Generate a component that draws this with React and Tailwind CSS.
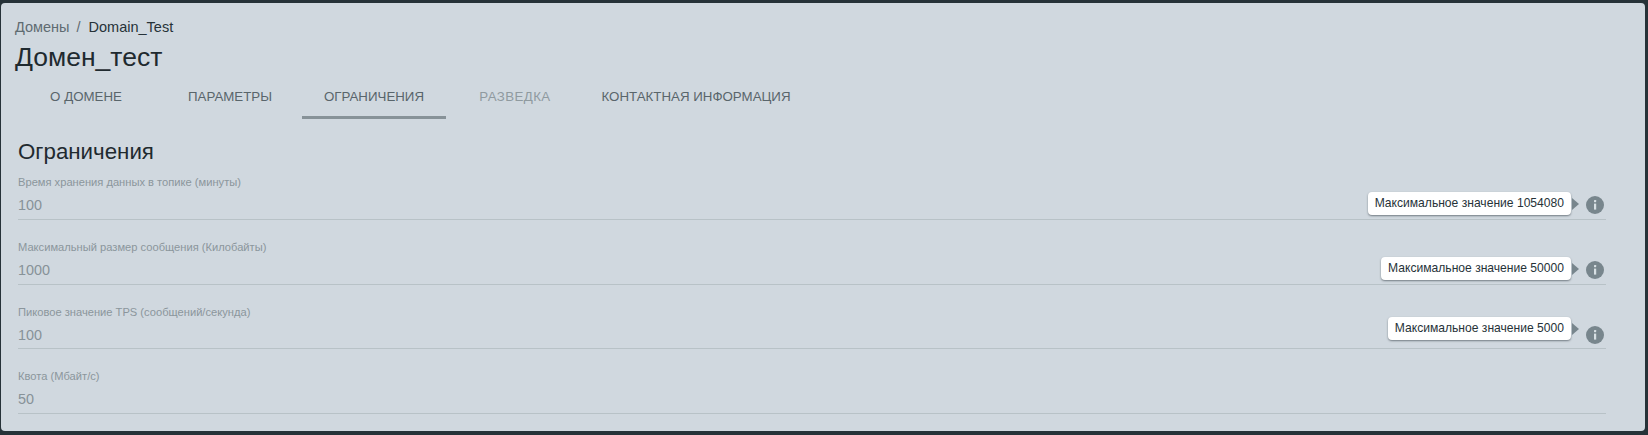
import React from "react";

const tabs = [
  { title: "О домене", width: "w-[144px]" },
  { title: "Параметры", width: "w-[144px]" },
  { title: "Ограничения", width: "w-[144px]", active: true },
  { title: "Разведка", width: "w-[138px] tracking-[0.4px]", disabled: true },
  { title: "Контактная информация", width: "w-[224px]" },
];

const fields = [
  { label: "Время хранения данных в топике (минуты)", value: "100", hint: "Максимальное значение 1054080", hintTop: "top-[17px]", height: "h-[45px]" },
  { label: "Максимальный размер сообщения (Килобайты)", value: "1000", hint: "Максимальное значение 50000", hintTop: "top-[17px]", height: "h-[45px]" },
  { label: "Пиковое значение TPS (сообщений/секунда)", value: "100", hint: "Максимальное значение 5000", hintTop: "top-[12px]", height: "h-[44px]" },
  { label: "Квота (Мбайт/с)", value: "50", height: "h-[45px]" },
];

const InfoIcon = () => (
  <svg width="18" height="18" viewBox="0 0 18 18" className="block">
    <circle cx="9" cy="9" r="9" fill="#78868d" />
    <rect x="8" y="4" width="2.2" height="2.2" rx="0.6" fill="#d8e0e4" />
    <rect x="8" y="7.6" width="2.2" height="6" fill="#d8e0e4" />
  </svg>
);

const Field = ({ label, value, hint, hintTop, height }) => (
  <div className={`relative mb-[20px] ${height} border-b border-[#b8c2c7] pt-[1px]`}>
    <div className="text-[11.15px] leading-[13px] text-[#8b969c]">{label}</div>
    <div className="mt-[6px] text-[14.4px] leading-[20px] text-[#879298]">{value}</div>
    {hint && (
      <>
        <div className={`absolute right-[27px] ${hintTop} flex items-center`}>
          <div className="rounded-[4px] bg-white px-[7px] py-[4px] text-[12.1px] leading-[15px] text-[#263238] shadow-[0_1px_2px_rgba(38,50,56,0.55)]">
            {hint}
          </div>
          <div className="ml-[1px] h-0 w-0 border-y-[6px] border-l-[7px] border-y-transparent border-l-[#78868d]" />
        </div>
        <div className="absolute right-[2px] top-[21px]">
          <InfoIcon />
        </div>
      </>
    )}
  </div>
);

const App = () => {
  return (
    <div className="h-[435px] w-full bg-[#263238] pb-[4px] pl-[1px] pr-[3px] pt-[3px] font-['Liberation_Sans',sans-serif]">
      <div className="h-full rounded-[4px] bg-[#d0d8df]">
        <div className="pl-[13px] pt-[15px]">
          <div className="flex pl-[1px] text-[14.5px] leading-[18px]">
            <span className="text-[#5f6b71]">Домены</span>
            <span className="ml-[7px] mr-[8px] text-[#5f6b71]">/</span>
            <span className="text-[#263238]">Domain_Test</span>
          </div>
          <h1 className="mt-[3px] pl-[1px] text-[26.5px] font-normal leading-[36px] text-[#1f2a2f]">Домен_тест</h1>
          <div className="mt-[1px] flex">
            {tabs.map(({ title, width, active, disabled }) => (
              <div
                key={title}
                className={`flex h-[43px] ${width} items-center justify-center whitespace-nowrap border-b-[3px] pt-[2px] text-[13.3px] uppercase leading-[16px] ${
                  active ? "border-[#879298]" : "border-transparent"
                } ${disabled ? "text-[#8f9a9f]" : "text-[#59656b]"}`}
              >
                {title}
              </div>
            ))}
          </div>
        </div>
        <div className="pl-[17px] pr-[39px] pt-[18px]">
          <h2 className="text-[22.3px] font-normal leading-[30px] text-[#1f2a2f]">Ограничения</h2>
          <div className="mt-[8px]">
            {fields.map((f) => (
              <Field key={f.label} {...f} />
            ))}
          </div>
        </div>
      </div>
    </div>
  );
};

export default App;
